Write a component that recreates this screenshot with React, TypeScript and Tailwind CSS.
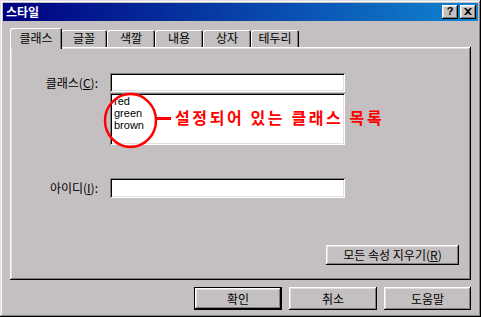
import React from "react";

const kr = { fontFamily: '"Noto Sans CJK KR", "Noto Sans", sans-serif' };
const latin = { fontFamily: '"Liberation Sans", "Noto Sans CJK KR", sans-serif' };

const raised =
  "shadow-[inset_-1px_-1px_#000,inset_1px_1px_#fff,inset_-2px_-2px_#808080,inset_2px_2px_#dfdfdf]";
const sunken =
  "shadow-[inset_1px_1px_#808080,inset_-1px_-1px_#fff,inset_2px_2px_#000,inset_-2px_-2px_#dfdfdf]";

function Tab({ label, selected, w }: { label: string; selected?: boolean; w: string }) {
  return (
    <div
      className={
        "flex justify-center text-[12px] text-black rounded-t-[2px] bg-[#c4c0c1] shadow-[inset_1px_1px_#fff,inset_-1px_0_#000,inset_-2px_0_#808080] " +
        w +
        (selected ? " h-[21px] -mb-[2px] pt-[2px] relative z-10 -mr-[1px]" : " h-[17px] pt-[0px]")
      }
      style={kr}
    >
      <span className="leading-[16px]">{label}</span>
    </div>
  );
}

function Btn({ children, def, w, h }: { children: React.ReactNode; def?: boolean; w: string; h: string }) {
  if (def) {
    return (
      <div className={"border border-black " + w + " " + h}>
        <div className={"w-full h-full flex items-center justify-center text-[12px] " + raised} style={kr}>
          {children}
        </div>
      </div>
    );
  }
  return (
    <div className={"flex items-center justify-center text-[12px] " + raised + " " + w + " " + h} style={kr}>
      {children}
    </div>
  );
}

export default function App() {
  return (
    <div
      className="w-[481px] h-[317px] bg-[#c4c0c1] p-[3px] flex flex-col shadow-[inset_-1px_-1px_#000,inset_1px_1px_#dfdfdf,inset_-2px_-2px_#808080,inset_2px_2px_#fff] overflow-hidden"
    >
      {/* Title bar */}
      <div className="h-[18px] flex items-center bg-[linear-gradient(90deg,#000080,#1084d0)] pl-[3px] pr-[2px]">
        <span className="text-white text-[12px] font-bold leading-[18px]" style={kr}>
          스타일
        </span>
        <div className="ml-auto flex gap-[2px]">
          <div className={"w-[16px] h-[14px] bg-[#c4c0c1] flex items-center justify-center " + raised}>
            <span className="text-[11px] font-bold leading-[11px] text-black -mt-[1px]" style={latin}>?</span>
          </div>
          <div className={"w-[16px] h-[14px] bg-[#c4c0c1] flex items-center justify-center " + raised}>
            <svg width="8" height="7" viewBox="0 0 8 7" className="-mt-[1px]">
              <path d="M0 0h2l2 2 2-2h2L5 3.5 8 7H6L4 5 2 7H0l3-3.5z" fill="#000" />
            </svg>
          </div>
        </div>
      </div>

      {/* Body */}
      <div className="flex-1 flex flex-col px-[7px] pt-[7px]">
        {/* Tabs */}
        <div className="flex items-end h-[19px] pl-[0px]">
          <Tab label="클래스" selected w="w-[52px]" />
          <Tab label="글꼴" w="w-[46px]" />
          <Tab label="색깔" w="w-[48px]" />
          <Tab label="내용" w="w-[48px]" />
          <Tab label="상자" w="w-[48px]" />
          <Tab label="테두리" w="w-[48px]" />
        </div>

        {/* Panel */}
        <div
          className="relative h-[233px] flex flex-col pt-[26px] shadow-[inset_-1px_-1px_#000,inset_1px_1px_#fff,inset_-2px_-2px_#808080,inset_2px_2px_#dfdfdf]"
        >
          {/* Class row */}
          <div className="flex items-center">
            <div className="w-[88px] text-right text-[12px] text-black leading-[14px]" style={kr}>
              클래스(<span className="underline">C</span>):
            </div>
            <div className={"ml-[12px] w-[235px] h-[19px] bg-white " + sunken} />
          </div>
          {/* List */}
          <div className={"ml-[100px] mt-[1px] w-[235px] h-[52px] bg-white pl-[4px] pt-[2px] " + sunken}>
            <div className="text-[11px] leading-[12px] text-black" style={latin}>
              <div>red</div>
              <div>green</div>
              <div>brown</div>
            </div>
          </div>
          {/* ID row */}
          <div className="flex items-center mt-[33px]">
            <div className="w-[88px] text-right text-[12px] text-black leading-[14px]" style={kr}>
              아이디(<span className="underline">I</span>):
            </div>
            <div className={"ml-[12px] w-[235px] h-[20px] bg-white " + sunken} />
          </div>
          {/* Clear button */}
          <div className="flex justify-end pr-[12px] mt-[47px]">
            <Btn w="w-[133px]" h="h-[20px]">
              <span>
                모든 속성 지우기(<span className="underline">R</span>)
              </span>
            </Btn>
          </div>

          {/* Annotation overlay */}
          <svg
            className="absolute left-[93px] top-[45px]"
            width="55"
            height="57"
            viewBox="0 0 55 57"
          >
            <ellipse cx="27.5" cy="28.5" rx="25.5" ry="26.5" fill="none" stroke="#ff0000" strokeWidth="2.5" />
          </svg>
          <div className="absolute left-[147px] top-[70px] w-[14px] h-[3px] bg-[#ff0000]" />
          <div
            className="absolute left-[165px] top-[61px] text-[16px] leading-[18px] font-bold text-[#ff0000] tracking-[2.6px] whitespace-nowrap"
            style={kr}
          >
            설정되어 있는 클래스 목록
          </div>
        </div>

        {/* Bottom buttons */}
        <div className="flex justify-end gap-[7px] mt-[7px]">
          <Btn def w="w-[88px]" h="h-[23px]">확인</Btn>
          <Btn w="w-[88px]" h="h-[23px]">취소</Btn>
          <Btn w="w-[87px]" h="h-[23px]">도움말</Btn>
        </div>
      </div>
    </div>
  );
}
